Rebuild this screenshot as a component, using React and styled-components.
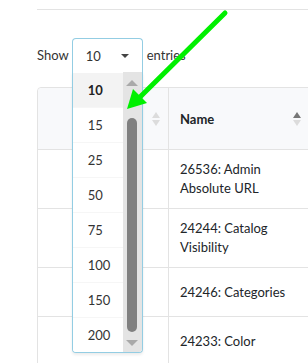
import React from "react";
import styled, { createGlobalStyle } from "styled-components";

const GlobalStyle = createGlobalStyle`
  html, body {
    margin:0;
    padding:0;
    background:#fff;
    overflow:hidden;
  }
  body {
    font-family:Lato, "Noto Sans", sans-serif;
    font-size:13px;
    color:#212529;
  }
`;

const Page = styled.div`
  position:relative;
  width:308px;
  height:363px;
  padding:9px 0 0 37px;
  box-sizing:border-box;
  overflow:hidden;
`;

const Rule = styled.div`
  border-top:1px solid #e3e3e3;
  margin-right:-37px;
`;

const LengthBar = styled.div`
  display:flex;
  align-items:center;
  margin-top:28px;
  height:34px;
`;

const Label = styled.span`
  line-height:19px;
  color:#333;
`;

const SelectBox = styled.div`
  position:relative;
  width:71px;
  height:34px;
  margin:0 4px 0 3px;
  box-sizing:border-box;
  border:1px solid #93cde3;
  border-bottom:none;
  border-radius:4px 4px 0 0;
  display:flex;
  align-items:center;
  justify-content:space-between;
  padding:0 13px 0 13px;
  color:#333;
  background:#fff;
  z-index:3;
`;

const Caret = styled.span`
  width:0;
  height:0;
  border-left:4px solid transparent;
  border-right:4px solid transparent;
  border-top:4px solid #444;
  margin-top:1px;
`;

const Dropdown = styled.div`
  position:absolute;
  top:100%;
  left:-1px;
  width:71px;
  height:281px;
  box-sizing:border-box;
  border:1px solid #93cde3;
  border-top:none;
  border-radius:0 0 4px 4px;
  background:#fff;
  display:flex;
  overflow:hidden;
  box-shadow:0 2px 3px rgba(0,0,0,0.08);
`;

const Options = styled.ul`
  list-style:none;
  margin:0;
  padding:1px 0 0;
  flex:1;
`;

const Option = styled.li`
  height:35px;
  display:flex;
  align-items:center;
  padding-left:15px;
  box-sizing:border-box;
  border-bottom:1px solid #f6f6f6;
  font-weight:${p => (p.$selected ? 700 : 400)};
  background:${p => (p.$selected ? "#f3f3f3" : "#fff")};
  color:${p => (p.$selected ? "#222" : "#333")};
`;

const Scrollbar = styled.div`
  width:19px;
  background:#e4e4e4;
  display:flex;
  flex-direction:column;
  align-items:center;
  padding:8px 0 6px;
  box-sizing:border-box;
`;

const ScrollArrow = styled.span`
  width:0;
  height:0;
  border-left:6px solid transparent;
  border-right:6px solid transparent;
  ${p =>
    p.$down
      ? "border-top:6px solid #a9a9a9;"
      : "border-bottom:6px solid #a9a9a9;"}
`;

const Thumb = styled.div`
  width:10px;
  flex:1;
  margin:32px 0 8px;
  border-radius:5px;
  background:#808080;
`;

const Table = styled.div`
  margin-top:15px;
  width:272px;
  border:1px solid #e3e3e3;
  border-radius:4px 0 0 0;
  display:grid;
  grid-template-columns:130px 141px;
`;

const HeadCell = styled.div`
  height:62px;
  background:#f8f9fb;
  border-bottom:1px solid #e3e3e3;
  border-left:${p => (p.$first ? "none" : "1px solid #e3e3e3")};
  display:flex;
  align-items:center;
  justify-content:space-between;
  padding:0 8px 0 11px;
  box-sizing:border-box;
  font-weight:700;
  color:#212529;
  border-radius:${p => (p.$first ? "4px 0 0 0" : "0")};
`;

const SortIcon = styled.span`
  display:flex;
  flex-direction:column;
  gap:2px;
  margin-top:1px;
`;

const SortArrow = styled.span`
  width:0;
  height:0;
  border-left:4px solid transparent;
  border-right:4px solid transparent;
  ${p =>
    p.$down
      ? `border-top:6px solid ${p.$color};`
      : `border-bottom:6px solid ${p.$color};`}
`;

const Cell = styled.div`
  min-height:49px;
  box-sizing:border-box;
  padding:10px 11px;
  line-height:19px;
  display:flex;
  align-items:center;
  border-bottom:1px solid #e3e3e3;
  border-left:${p => (p.$first ? "none" : "1px solid #e3e3e3")};
  color:#212529;
`;

const ArrowOverlay = styled.svg`
  position:absolute;
  left:0;
  top:0;
  pointer-events:none;
  z-index:10;
`;

const sizes = [10, 15, 25, 50, 75, 100, 150, 200];
const rows = [
  "26536: Admin Absolute URL",
  "24244: Catalog Visibility",
  "24246: Categories",
  "24233: Color",
];

function Sort({ active }) {
  return (
    <SortIcon>
      <SortArrow $color={active ? "#777" : "#dcdcdc"} />
      <SortArrow $down $color="#dcdcdc" />
    </SortIcon>
  );
}

export default function App() {
  return (
    <>
      <GlobalStyle />
      <Page>
        <Rule />
        <LengthBar>
          <Label>Show</Label>
          <SelectBox>
            <span>10</span>
            <Caret />
            <Dropdown>
              <Options>
                {sizes.map(s => (
                  <Option key={s} $selected={s === 10}>{s}</Option>
                ))}
              </Options>
              <Scrollbar>
                <ScrollArrow />
                <Thumb />
                <ScrollArrow $down />
              </Scrollbar>
            </Dropdown>
          </SelectBox>
          <Label>entries</Label>
        </LengthBar>
        <Table>
          <HeadCell $first>
            <span />
            <Sort />
          </HeadCell>
          <HeadCell>
            <span>Name</span>
            <Sort active />
          </HeadCell>
          {rows.map(r => (
            <React.Fragment key={r}>
              <Cell $first />
              <Cell>{r}</Cell>
            </React.Fragment>
          ))}
        </Table>
        <ArrowOverlay width="308" height="363" viewBox="0 0 308 363">
          <line x1="225" y1="13" x2="137" y2="100" stroke="#00f000" strokeWidth="5" strokeLinecap="round" />
          <polygon points="127,109 133,89 147,103" fill="#00f000" />
        </ArrowOverlay>
      </Page>
    </>
  );
}
